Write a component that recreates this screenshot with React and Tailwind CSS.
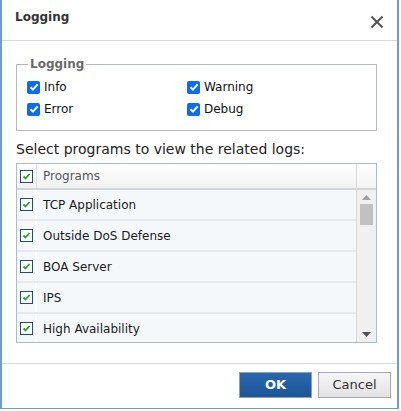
import React from "react";

const font = { fontFamily: "'DejaVu Sans', Verdana, sans-serif" };

function BlueCheck({ label }) {
  return (
    <label className="h-[18px] flex items-center gap-[4px] text-[12px] text-[#111]">
      <span className="w-[13px] h-[13px] rounded-[2px] bg-[#0a6cf0] flex items-center justify-center">
        <svg width="10" height="10" viewBox="0 0 10 10">
          <path d="M1.5 5.2 L4 7.6 L8.6 2.4" stroke="white" strokeWidth="2" fill="none" />
        </svg>
      </span>
      {label}
    </label>
  );
}

function GreenCheck() {
  return (
    <span className="w-[13px] h-[13px] border border-[#1d4f7a] bg-white flex items-center justify-center">
      <svg width="9" height="9" viewBox="0 0 9 9">
        <path d="M1.5 4.5 L3.5 6.5 L7.5 2" stroke="#2aa52a" strokeWidth="1.8" fill="none" />
      </svg>
    </span>
  );
}

const programs = [
  "TCP Application",
  "Outside DoS Defense",
  "BOA Server",
  "IPS",
  "High Availability",
];

export default function App() {
  return (
    <div className="w-[401px] h-[411px] bg-white" style={font}>
      <div className="w-[399px] h-[409px] border-l-2 border-r-2 border-b border-[#6f9bd0] flex flex-col">
        <div className="h-[41px] flex items-center justify-between pl-[13px] pr-[13px] border-b border-[#d9d9d9]">
          <span className="text-[12px] font-bold text-[#333] -mt-[7px]">Logging</span>
          <svg width="14" height="14" viewBox="0 0 14 14" className="mt-[3px]">
            <path d="M1.5 1.5 L12.5 12.5 M12.5 1.5 L1.5 12.5" stroke="#555" strokeWidth="2" />
          </svg>
        </div>

        <div className="pl-[14px] pr-[20px] pt-[15px] flex-1">
          <fieldset className="border border-[#b4b7c4] pl-[10px] pb-[12px] pt-[6px] m-0">
            <legend className="text-[12px] leading-[16px] font-bold text-[#6a6a6a] px-[2px] ml-[1px]">Logging</legend>
            <div className="grid grid-cols-[160px_1fr] gap-y-[4px]">
              <BlueCheck label="Info" />
              <BlueCheck label="Warning" />
              <BlueCheck label="Error" />
              <BlueCheck label="Debug" />
            </div>
          </fieldset>

          <div className="text-[14px] text-[#222] mt-[9px] leading-[18px]">Select programs to view the related logs:</div>

          <div className="mt-[5px] border border-[#a9bbd0] flex h-[180px] w-[361px]">
            <div className="flex-1 flex flex-col overflow-hidden">
              <div className="h-[26px] shrink-0 flex border-b-2 border-[#d4d4d4] bg-gradient-to-b from-white to-[#f2f2f2]">
                <div className="w-[20px] border-r border-[#dedede] flex items-center justify-center">
                  <GreenCheck />
                </div>
                <div className="flex-1 flex items-center pl-[6px] text-[12px] text-[#555]">Programs</div>
              </div>
              {programs.map((p) => (
                <div key={p} className="h-[31px] shrink-0 flex border-b-2 border-[#e6eaee] bg-[#f4f8fb]">
                  <div className="w-[20px] border-r-2 border-[#ffffff] flex items-center justify-center">
                    <GreenCheck />
                  </div>
                  <div className="flex-1 flex items-center pl-[6px] text-[12px] text-[#1a1a1a]">{p}</div>
                </div>
              ))}
            </div>
            <div className="w-[20px] border-l border-[#d8d8d8] flex flex-col">
              <div className="h-[26px] border-b-2 border-[#d4d4d4] bg-gradient-to-b from-white to-[#f2f2f2]" />
              <div className="flex-1 bg-[#f0f0f0] flex flex-col items-center">
                <svg width="9" height="5" viewBox="0 0 9 5" className="mt-[5px]">
                  <path d="M0 5 L4.5 0 L9 5 Z" fill="#a0a0a0" />
                </svg>
                <div className="w-[13px] h-[21px] bg-[#c1c1c1] mt-[4px]" />
                <div className="flex-1" />
                <svg width="9" height="5" viewBox="0 0 9 5" className="mb-[5px]">
                  <path d="M0 0 L4.5 5 L9 0 Z" fill="#505050" />
                </svg>
              </div>
            </div>
          </div>
        </div>

        <div className="h-[45px] border-t border-[#d9d9d9] flex items-start justify-end gap-[6px] pr-[6px] pt-[8px]">
          <button className="w-[73px] h-[26px] border border-[#8a9fb8] bg-gradient-to-b from-[#2a67ad] to-[#1d5597] text-white text-[13px] font-bold">
            OK
          </button>
          <button className="w-[73px] h-[26px] border border-[#a6a8b5] bg-gradient-to-b from-[#f6f6f6] to-[#e2e2e2] text-[#333] text-[13px]">
            Cancel
          </button>
        </div>
      </div>
    </div>
  );
}
